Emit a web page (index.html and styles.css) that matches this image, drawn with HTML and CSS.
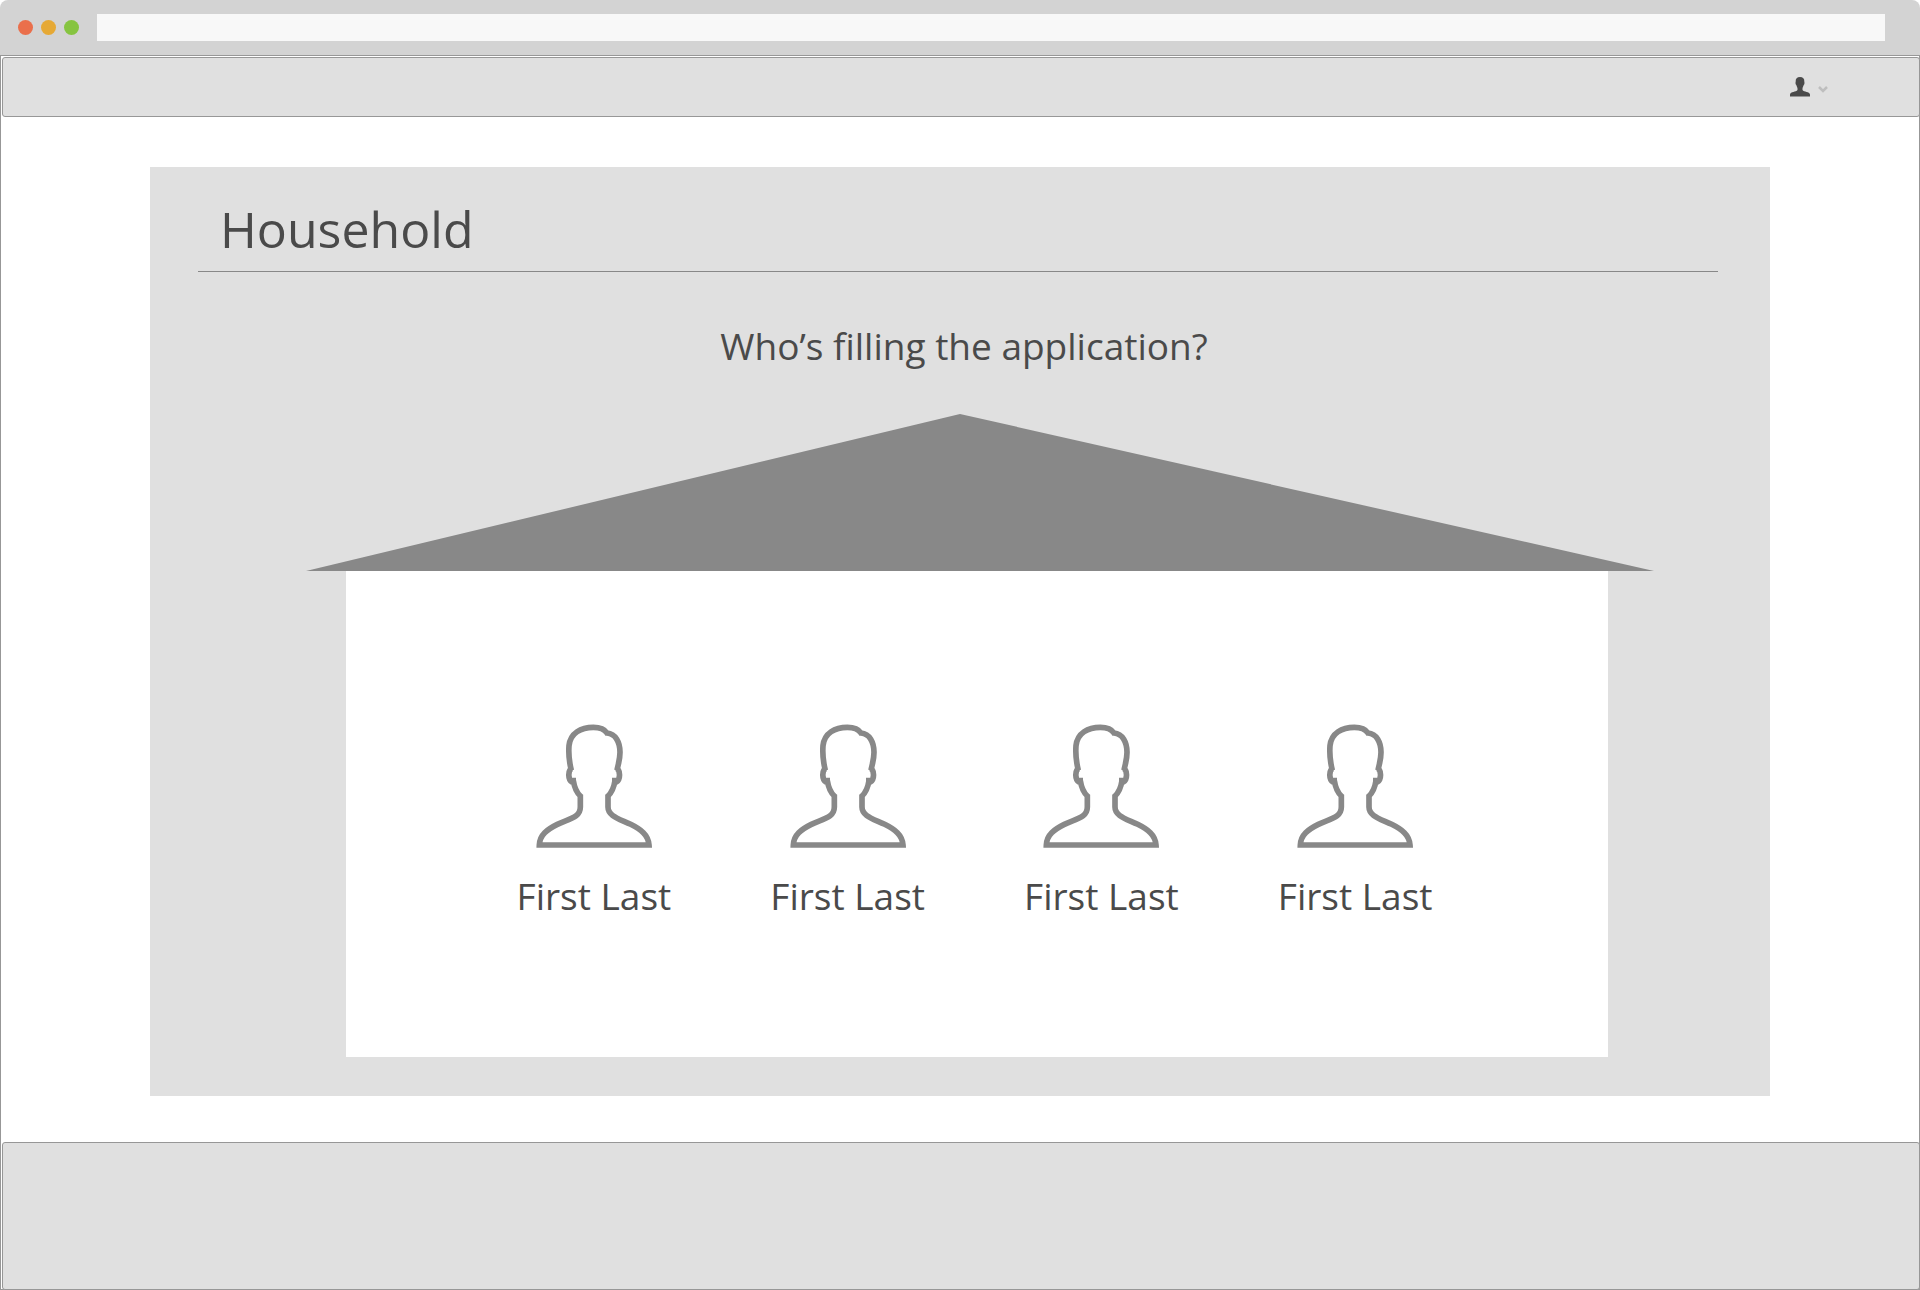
FILE: index.html
```html
<!DOCTYPE html>
<html lang="en">
<head>
  <meta charset="UTF-8">
  <meta name="viewport" content="width=device-width, initial-scale=1.0">
  <title>Household</title>
  <link rel="stylesheet" href="styles.css">
</head>
<body>
  <svg class="symbols" aria-hidden="true">
    <symbol id="person" viewBox="51 41 348 372">
      <path d="M157 180 C150 152 148 132 150 106 C154 68 186 51 223 51 C241 51 257 57 264 68 C290 70 303 96 303 126 C303 148 297 164 294 180 M160 174 C147 177 145 208 160 216 M171 211 L163 211 C166 230 173 247 184 257 V290 C184 322 150 325 115 342 C85 357 62 373 61 404 H390 C388 373 365 357 335 342 C300 325 267 317 267 290 V257 C278 247 285 230 288 211 L279 211 M291 216 C306 208 304 177 291 174"/>
    </symbol>
  </svg>

  <div class="browser-bar">
    <span class="dot red"></span>
    <span class="dot yellow"></span>
    <span class="dot green"></span>
    <input class="address" type="text" aria-label="Address">
  </div>

  <div class="window">
    <header class="header">
      <button class="account" aria-label="Account">
        <svg class="account-icon" viewBox="0 0 20 20">
          <path d="M10 0 C13 0 14.500 1.500 14.300 4.500 C14.700 6 14.400 7.500 13.700 8 C13.300 9.500 12.500 10.500 12.500 11.500 V13 C14 15 19.500 14.500 20 17.500 V19.500 H0 V17.500 C.5 14.500 6 15 7.500 13 V11.500 C7.500 10.500 6.700 9.500 6.300 8 C5.600 7.500 5.300 6 5.700 4.500 C5.500 1.500 7 0 10 0 Z"/>
        </svg>
        <svg class="chevron" viewBox="0 0 10 7">
          <path d="M1 1 L5 5 L9 1"/>
        </svg>
      </button>
    </header>

    <main class="main">
      <section class="panel">
        <h1>Household</h1>
        <h2>Who’s filling the application?</h2>
        <div class="house">
          <svg class="roof" viewBox="0 0 1348 157" preserveAspectRatio="none">
            <path d="M0 157 L654 0 L1348 157 Z"/>
          </svg>
          <div class="walls">
            <button class="member">
              <svg class="member-icon"><use href="#person"/></svg>
              <span>First Last</span>
            </button>
            <button class="member">
              <svg class="member-icon"><use href="#person"/></svg>
              <span>First Last</span>
            </button>
            <button class="member">
              <svg class="member-icon"><use href="#person"/></svg>
              <span>First Last</span>
            </button>
            <button class="member">
              <svg class="member-icon"><use href="#person"/></svg>
              <span>First Last</span>
            </button>
          </div>
        </div>
      </section>
    </main>

    <footer class="footer"></footer>
  </div>
</body>
</html>
```

FILE: styles.css
```css
* {
  box-sizing: border-box;
}
body {
  font-family: 'Open Sans', 'Noto Sans', sans-serif;
  margin: 0;
  background: white;
  color: #4a4a4a;
  display: flex;
  flex-direction: column;
  min-height: 100vh;
}
button {
  font: inherit;
  color: inherit;
  background: none;
  border: none;
  padding: 0;
  cursor: pointer;
}
.symbols {
  position: absolute;
  width: 0;
  height: 0;
}

/* browser chrome */
.browser-bar {
  display: flex;
  align-items: center;
  gap: 8px;
  height: 55px;
  padding: 0 35px 0 18px;
  background: #d3d3d3;
  border-radius: 8px 8px 0 0;
}
.dot {
  width: 15px;
  height: 15px;
  border-radius: 50%;
}
.red {
  background: #ea6f4b;
}
.yellow {
  background: #e6a935;
}
.green {
  background: #86c440;
}
.address {
  flex: 1;
  height: 27px;
  margin-left: 10px;
  padding: 0 8px;
  border: none;
  background: #f8f8f8;
}
.window {
  flex: 1;
  display: flex;
  flex-direction: column;
  border: 1px solid #979797;
  padding: 1px 0 0 1px;
}

/* header and footer, their right edge shares the window border */
.header,
.footer {
  margin-right: -1px;
  background: #e0e0e0;
  border: 1px solid #979797;
  border-radius: 3px;
}
.header {
  display: flex;
  justify-content: flex-end;
  align-items: center;
  height: 60px;
  padding-right: 91px;
}
.footer {
  flex: 1;
  min-height: 100px;
  margin-bottom: -1px;
}
.account {
  display: flex;
  align-items: center;
  gap: 8px;
}
.account-icon {
  width: 20px;
  height: 20px;
  fill: #4a4a4a;
}
.chevron {
  width: 10px;
  height: 7px;
  margin-top: 5px;
  fill: none;
  stroke: #bebebe;
  stroke-width: 2.5;
}

/* household panel */
.main {
  padding: 50px 149px 46px 148px;
}
.panel {
  background: #e0e0e0;
  padding: 28px 52px 39px 48px;
}
h1 {
  margin: 0;
  padding: 0 22px 8px;
  font-size: 50px;
  line-height: 68px;
  font-weight: 400;
  border-bottom: 1px solid #888;
}
h2 {
  margin: 48px 0 42px;
  padding-left: 12px;
  font-size: 37px;
  line-height: 52px;
  font-weight: 400;
  text-align: center;
}
.house {
  margin: 0 64px 0 108px;
}
.roof {
  display: block;
  width: 100%;
  height: 157px;
  fill: #888;
}
.walls {
  display: grid;
  grid-template-columns: repeat(4, 1fr);
  margin: 0 46px 0 40px;
  padding: 153px 126px 135px 121px;
  background: white;
}
.member {
  display: flex;
  flex-direction: column;
  align-items: center;
  gap: 22px;
  font-size: 37px;
  line-height: 52px;
}
.member-icon {
  width: 116px;
  height: 124px;
  fill: none;
  stroke: #888;
  stroke-width: 17;
}
```
